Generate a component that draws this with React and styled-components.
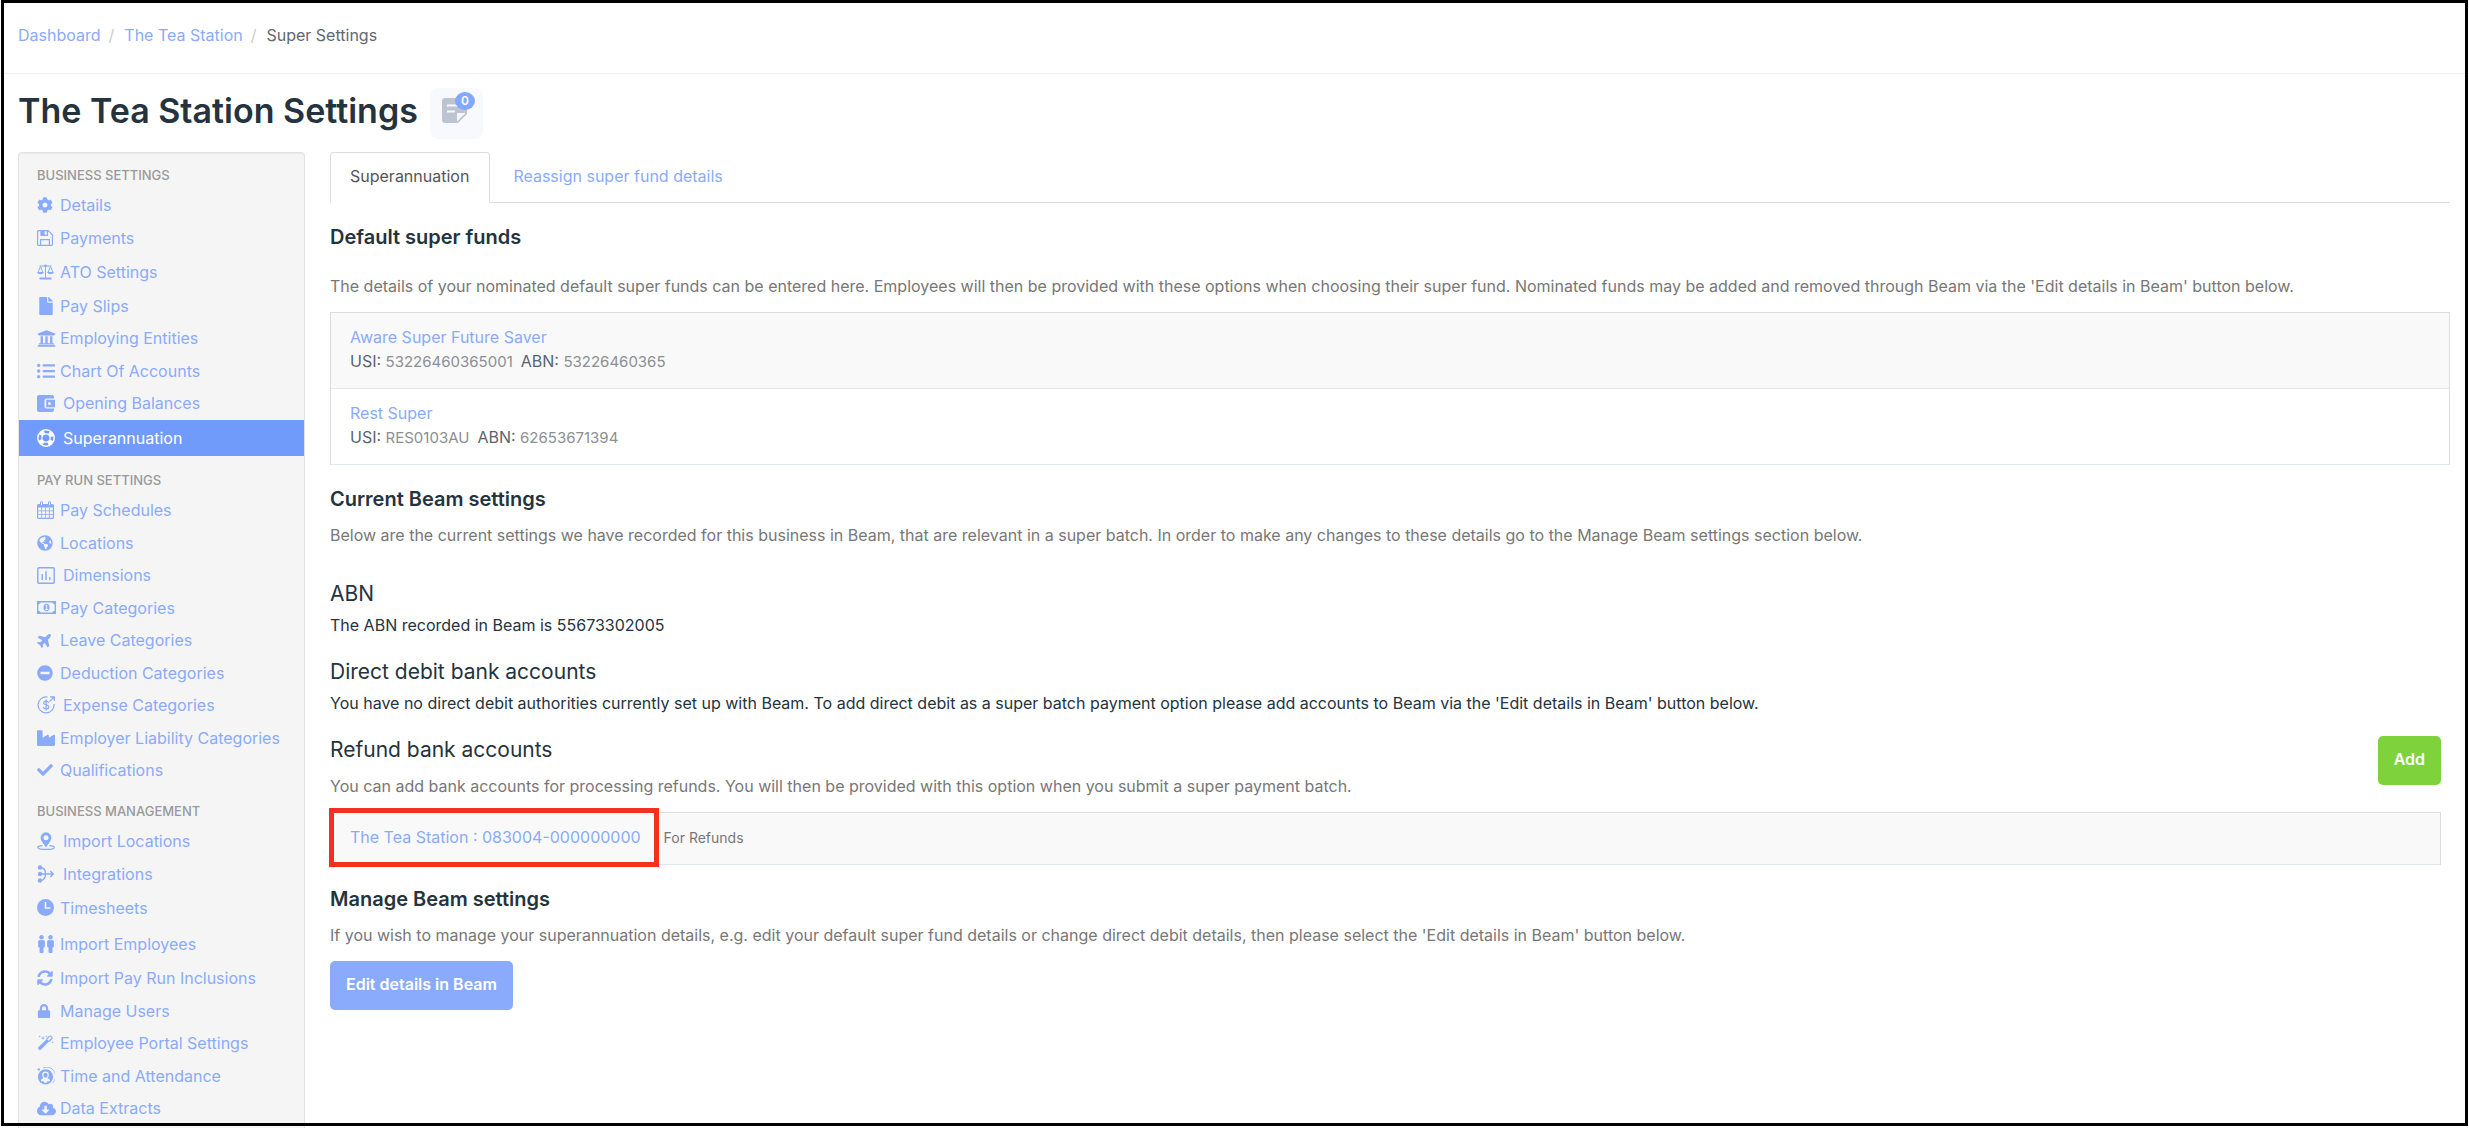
import React from 'react'
import styled, { createGlobalStyle, css } from 'styled-components';
import {
    FaCog, FaFile, FaUniversity, FaListUl, FaGlobeAmericas, FaPlane, FaMinusCircle,
    FaIndustry, FaCheck, FaMale, FaSyncAlt, FaLock, FaMagic, FaCloudDownloadAlt,
} from 'react-icons/fa';

const GlobalStyle = createGlobalStyle`
    * {
        box-sizing: border-box;
    }

    body {
        margin: 0;
        background-color: #ffffff;
        color: #24333e;
        font-family: Inter, 'Liberation Sans', sans-serif;
        font-size: 16px;
        line-height: 24px;
    }

    a {
        color: #8aabfb;
        text-decoration: none;
    }

    svg {
        display: block;
        flex: none;
    }
`;

const Page = styled.div`
    display: flex;
    flex-direction: column;
    height: 100vh;
    overflow: hidden;
`;

const Frame = styled.div`
    position: fixed;
    inset: 0 1px 2px 1px;
    border: 3px solid #000000;
    pointer-events: none;
    z-index: 10;
`;

const Breadcrumbs = styled.nav`
    display: flex;
    align-items: center;
    padding: 23px 18px 26px;
    border-bottom: 1px solid #f1f1f1;
`;

const Crumb = styled.span`
    color: #5f6770;

    &:not(:last-child)::after {
        content: '/';
        padding: 0 10px 0 8px;
        color: #cccccc;
    }
`;

const TitleBar = styled.header`
    display: flex;
    align-items: flex-start;
    gap: 12px;
    padding: 14px 18px 13px;
`;

const Title = styled.h1`
    margin: 0;
    font-size: 34px;
    font-weight: 600;
    line-height: 46px;
`;

const NotesButton = styled.button`
    position: relative;
    display: flex;
    align-items: center;
    justify-content: center;
    width: 53px;
    height: 51px;
    padding: 0 4px 6px 0;
    border: 0;
    border-radius: 8px;
    background-color: #f8f9fc;
`;

const Badge = styled.span`
    position: absolute;
    top: 4px;
    right: 8px;
    width: 20px;
    border-radius: 50%;
    background-color: #84a8fb;
    color: #ffffff;
    font-family: Inter, 'Liberation Sans', sans-serif;
    font-size: 12px;
    font-weight: 600;
    line-height: 18px;
    text-align: center;
`;

const Body = styled.div`
    display: flex;
    flex: 1;
    align-items: stretch;
    gap: 25px;
    min-height: 0;
    padding: 0 19px 0 18px;
`;

const Sidebar = styled.nav`
    flex: none;
    width: 287px;
    padding-top: 8px;
    border: 1px solid #e3e3e3;
    border-bottom: 0;
    border-radius: 4px 4px 0 0;
    background-color: #f5f5f5;
    box-shadow: inset 0 1px 1px rgba(0, 0, 0, 0.05);
    overflow: hidden;
`;

const NavHeading = styled.h2`
    margin: 0;
    padding-left: 18px;
    color: #999999;
    font-size: 13px;
    font-weight: 500;
    line-height: 28px;
`;

const NavList = styled.ul`
    margin: 0 0 10px;
    padding: 0;
    list-style: none;
`;

const NavItem = styled.li`
    height: ${({ $tall }) => ($tall ? '36px' : '33px')};

    &:nth-child(even) {
        height: ${({ $tall }) => ($tall ? '36px' : '32px')};
    }
`;

const NavLink = styled.a`
    display: flex;
    align-items: center;
    height: 100%;
    padding: 0 0 1px 18px;
    white-space: nowrap;

    ${({ $active }) => $active && css`
        background-color: #719bfb;
        color: #ffffff;
    `}
`;

const NavIcon = styled.span`
    display: flex;
    align-items: center;
    flex: none;
    width: ${({ $wide }) => ($wide ? '26px' : '23px')};
`;

const Content = styled.main`
    flex: 1;
    min-width: 0;
`;

const Tabs = styled.div`
    display: flex;
    gap: 3px;
    border-bottom: 1px solid #dddddd;
`;

const Tab = styled.a`
    margin-bottom: -1px;
    padding: 11px 20px 14px 19px;
    border: 1px solid transparent;
    border-radius: 4px 4px 0 0;

    ${({ $active }) => $active && css`
        border-color: #dddddd;
        border-bottom-color: #ffffff;
        background-color: #ffffff;
        color: #555555;
    `}
`;

const SectionTitle = styled.h3`
    margin: 18px 0 0;
    font-size: 20px;
    font-weight: 600;
    line-height: 32px;
`;

const SubTitle = styled.h4`
    margin: 0;
    font-size: 21px;
    font-weight: 400;
    line-height: 28px;
`;

const Help = styled.p`
    margin: ${({ $spaced }) => ($spaced ? '21px' : '8px')} 0 14px;
    color: #777777;
`;

const Setting = styled.section`
    margin-top: ${({ $first }) => ($first ? '33px' : '21px')};
`;

const SettingText = styled.p`
    margin: 5px 0 0;
`;

const RefundSection = styled.section`
    margin-top: 21px;
    padding-right: 9px;
`;

const RefundHeader = styled.div`
    display: flex;
    align-items: flex-start;
    justify-content: space-between;

    ${Help} {
        margin-top: 10px;
    }
`;

const Table = styled.table`
    width: 100%;
    border: 1px solid #dddddd;
    border-bottom: 0;
    border-spacing: 0;
`;

const Cell = styled.td`
    padding: 12px 19px 14px;
    border-bottom: 1px solid #e1e7f1;

    tr:nth-child(odd) > & {
        background-color: #f9f9f9;
    }
`;

const FundCodes = styled.div`
    display: flex;
    gap: 8px;
    color: #5a6470;
`;

const Code = styled.span`
    color: #8c8f93;
    font-size: 15px;
`;

const AccountLink = styled.a`
    position: relative;
    margin-right: 20px;

    &::after {
        content: '';
        position: absolute;
        inset: -19px -18px -20px -21px;
        border: 5px solid #f23022;
    }
`;

const Small = styled.small`
    padding-left: 3px;
    color: #777777;
    font-size: 14px;
`;

const Button = styled.button`
    height: 49px;
    padding: 0 16px 3px;
    border: 0;
    border-radius: 5px;
    background-color: ${({ $success }) => ($success ? '#7ed33c' : '#8aabfb')};
    color: #ffffff;
    font-family: inherit;
    font-size: 16px;
    font-weight: 600;
`;

const NoteIcon = () => (
    <svg width="25" height="25" viewBox="0 0 25 25">
        <path fill="#bcc4d2" d="M3 0h19a3 3 0 0 1 3 3v13l-9 9H3a3 3 0 0 1-3-3V3a3 3 0 0 1 3-3z" />
        <path fill="#f8f9fc" d="M5 6.500h14v2H5zM5 12.500h8v2H5zM15 15h8.500L15 23.500z" />
    </svg>
);

const FloppyIcon = () => (
    <svg width="16" height="16" viewBox="0 0 16 16" fill="none" stroke="currentColor" strokeWidth="1.200">
        <path d="M.6 1.600a1 1 0 0 1 1-1h9.600l4.200 4.200v9.600a1 1 0 0 1-1 1H1.600a1 1 0 0 1-1-1z" />
        <path d="M3.600 15.400V9.600h8.800v5.800M4 .6v4.800h6.400V.6" />
        <path fill="currentColor" stroke="none" d="M4 1h3.600v4.400H4z" />
    </svg>
);

const ScaleIcon = () => (
    <svg width="17" height="16" viewBox="0 0 17 16" fill="none" stroke="currentColor" strokeWidth="1">
        <path d="M2.500 2h12M8.500 1v13M3.500 2.500L1 8.500M3.500 2.500L6 8.500M13.500 2.500L11 8.500M13.500 2.500L16 8.500" />
        <circle cx="8.500" cy="1.800" r="1.300" fill="currentColor" stroke="none" />
        <path fill="currentColor" stroke="none" d="M.3 8h6.400c0 3-6.400 3-6.400 0zM10.300 8h6.400c0 3-6.400 3-6.400 0zM2.500 13.500h12v2h-12z" />
    </svg>
);

const WalletIcon = () => (
    <svg width="18" height="17" viewBox="0 0 18 17" fill="currentColor">
        <path d="M2 0h13a2 2 0 0 1 2 2v1.400H9.500a2 2 0 0 0-2 2v6.200a2 2 0 0 0 2 2H17V15a2 2 0 0 1-2 2H2a2 2 0 0 1-2-2V2a2 2 0 0 1 2-2z" />
        <path fillRule="evenodd" d="M9.200 4.800H18v7.400H9.200zM12.400 7a1.500 1.500 0 1 0 0 3 1.500 1.500 0 0 0 0-3z" />
    </svg>
);

const LifeRingIcon = () => (
    <svg width="18" height="18" viewBox="0 0 18 18" fill="none" stroke="currentColor">
        <circle cx="9" cy="9" r="8.200" strokeWidth="1.400" />
        <circle cx="9" cy="9" r="4.200" strokeWidth="1.200" />
        <circle cx="9" cy="9" r="6.200" strokeWidth="4" strokeDasharray="4.800 4.939" strokeDashoffset="-2.470" />
    </svg>
);

const CalendarIcon = () => (
    <svg width="17" height="18" viewBox="0 0 17 18" fill="none" stroke="currentColor">
        <path strokeWidth="1.200" d="M1.600 3.600h13.800a1 1 0 0 1 1 1v11.800a1 1 0 0 1-1 1H1.600a1 1 0 0 1-1-1V4.600a1 1 0 0 1 1-1z" />
        <path strokeWidth=".8" d="M1 9.800h15M1 13.500h15M4.600 6.600v10.800M8.500 6.600v10.800M12.400 6.600v10.800" />
        <path fill="currentColor" stroke="none" d="M1 3.500h15v3H1z" />
        <path stroke="currentColor" strokeWidth="3" strokeLinecap="round" d="M4.500 1.800v2M12.500 1.800v2" />
        <path stroke="#f5f5f5" strokeWidth="1" strokeLinecap="round" d="M4.500 1.600v2.200M12.500 1.600v2.200" />
    </svg>
);

const ChartIcon = () => (
    <svg width="18" height="17" viewBox="0 0 18 17" fill="none" stroke="currentColor" strokeWidth="1.500">
        <rect x=".8" y=".8" width="16.400" height="15.400" rx="1.200" />
        <path d="M5.200 7v6M9 4.200V13M12.800 10v3" />
    </svg>
);

const MoneyIcon = () => (
    <svg width="19" height="13" viewBox="0 0 19 13" fill="none" stroke="currentColor">
        <path strokeWidth="1.400" d="M.7.7h17.600v11.600H.7z" />
        <path fill="currentColor" stroke="none" d="M0 0h4c0 2-1.500 3.500-4 3.500zM19 0h-4c0 2 1.500 3.500 4 3.500zM0 13h4c0-2-1.500-3.500-4-3.500zM19 13h-4c0-2 1.500-3.500 4-3.500z" />
        <ellipse cx="9.500" cy="6.500" rx="3" ry="3.800" fill="currentColor" stroke="none" />
        <path stroke="#f5f5f5" d="M8.300 5l1.400-.8V8.500M8 8.600h3.200" />
    </svg>
);

const ExpenseIcon = () => (
    <svg width="18" height="18" viewBox="0 0 18 18" fill="none" stroke="currentColor" strokeWidth="1.200">
        <path d="M10.500 1.100A8 8 0 1 0 17 8" />
        <path d="M12.500 5.500L16.800 1.200M13 .8h4.300v4.300" />
        <path d="M11.600 6.800c-.3-1.100-1.200-1.600-2.500-1.600-1.500 0-2.500.7-2.500 1.800 0 2.700 5.200 1.200 5.200 4 0 1.200-1.100 1.900-2.700 1.900-1.500 0-2.500-.7-2.800-1.900M9.100 3.600v11" />
    </svg>
);

const PinIcon = () => (
    <svg width="18" height="18" viewBox="0 0 18 18" fill="currentColor">
        <path fillRule="evenodd" d="M9 .3a5.400 5.400 0 0 1 5.400 5.400C14.400 8.700 11 12 9 15.400 7 12 3.600 8.700 3.600 5.700A5.400 5.400 0 0 1 9 .3zm0 2.900a2.500 2.500 0 1 0 0 5 2.500 2.500 0 0 0 0-5z" />
        <path fill="none" stroke="currentColor" strokeWidth="1.300" d="M5.600 13.700c-3 .3-4.900.9-4.900 1.700 0 1.100 3.400 1.900 8.300 1.900s8.300-.8 8.300-1.900c0-.8-1.900-1.400-4.900-1.700" />
    </svg>
);

const MergeIcon = () => (
    <svg width="17" height="18" viewBox="0 0 17 18" fill="none" stroke="currentColor" strokeWidth="1.400">
        <circle cx="3" cy="2.500" r="2.200" fill="currentColor" stroke="none" />
        <circle cx="3" cy="9" r="2.200" fill="currentColor" stroke="none" />
        <circle cx="3" cy="15.500" r="2.200" fill="currentColor" stroke="none" />
        <path d="M3 9h13M13.200 6l3 3-3 3M3 2.500c4 0 5.500 3 5.500 6.500s-1.500 6.500-5.500 6.500" />
    </svg>
);

const ClockIcon = () => (
    <svg width="17" height="17" viewBox="0 0 17 17">
        <circle cx="8.500" cy="8.500" r="8.500" fill="currentColor" />
        <path fill="none" stroke="#f5f5f5" strokeWidth="1.500" d="M8.500 3v6h5" />
    </svg>
);

const WandIcon = () => (
    <svg width="17" height="16" viewBox="0 0 17 16" fill="none" stroke="currentColor">
        <path strokeWidth="3.400" d="M1.800 14.300L11 5.100" />
        <path strokeWidth="1.100" d="M9.600 4.200l3-3a.8.8 0 0 1 1.200 0l1.100 1.100a.8.8 0 0 1 0 1.200l-3 3" />
        <path fill="currentColor" stroke="none" d="M6 .8l.5 1.700 1.700.5-1.700.5L6 5.200l-.5-1.700L3.800 3l1.700-.5zM2.600.2l.3.900.9.3-.9.3-.3.900-.3-.9-.9-.3.9-.3zM9.500.2l.3.900.9.3-.9.3-.3.900-.3-.9-.9-.3.9-.3zM15.600 6.200l.3.900.9.3-.9.3-.3.900-.3-.9-.9-.3.9-.3z" />
    </svg>
);

const AttendanceIcon = () => (
    <svg width="18" height="18" viewBox="0 0 18 18" fill="none" stroke="currentColor">
        <circle cx="8.500" cy="9.800" r="7.600" fill="currentColor" stroke="none" />
        <path fill="#f5f5f5" stroke="none" d="M8.500 4.600a3.300 3.300 0 0 1 3.300 3.400c0 1.400-.6 2.400-1.400 3 1.700.5 2.500 1.500 2.700 3.300h-2.600l-.8 1.400H7.300l-.8-1.400H3.900c.2-1.800 1-2.800 2.700-3.300-.8-.6-1.400-1.600-1.400-3a3.300 3.300 0 0 1 3.300-3.400z" />
        <path fill="currentColor" stroke="none" d="M8.500 5.800c1.300 0 2.100 1 2.100 2.300s-.8 2.700-2.100 2.700-2.100-1.400-2.100-2.700.8-2.300 2.100-2.300z" />
        <path strokeWidth=".8" d="M6 .9a9 9 0 0 1 9.600 15" />
        <circle cx="1.800" cy="2.400" r="1.200" fill="currentColor" stroke="none" />
    </svg>
);

const PeopleIcon = styled.span`
    display: flex;

    svg {
        width: 9px;
        height: 18px;
    }
`;

const PlaneIcon = styled(FaPlane)`
    transform: rotate(-45deg);
`;

const navSections = [
    {
        title: 'BUSINESS SETTINGS',
        items: [
            { label: 'Details', icon: <FaCog size={16} /> },
            { label: 'Payments', icon: <FloppyIcon /> },
            { label: 'ATO Settings', icon: <ScaleIcon />, tall: true },
            { label: 'Pay Slips', icon: <FaFile size={18} /> },
            { label: 'Employing Entities', icon: <FaUniversity size={19} /> },
            { label: 'Chart Of Accounts', icon: <FaListUl size={18} /> },
            { label: 'Opening Balances', icon: <WalletIcon />, wide: true },
            { label: 'Superannuation', icon: <LifeRingIcon />, wide: true, tall: true, active: true },
        ],
    },
    {
        title: 'PAY RUN SETTINGS',
        items: [
            { label: 'Pay Schedules', icon: <CalendarIcon /> },
            { label: 'Locations', icon: <FaGlobeAmericas size={16} /> },
            { label: 'Dimensions', icon: <ChartIcon />, wide: true },
            { label: 'Pay Categories', icon: <MoneyIcon /> },
            { label: 'Leave Categories', icon: <PlaneIcon size={16} /> },
            { label: 'Deduction Categories', icon: <FaMinusCircle size={16} /> },
            { label: 'Expense Categories', icon: <ExpenseIcon />, wide: true },
            { label: 'Employer Liability Categories', icon: <FaIndustry size={18} /> },
            { label: 'Qualifications', icon: <FaCheck size={16} /> },
        ],
    },
    {
        title: 'BUSINESS MANAGEMENT',
        items: [
            { label: 'Import Locations', icon: <PinIcon />, wide: true },
            { label: 'Integrations', icon: <MergeIcon />, wide: true },
            { label: 'Timesheets', icon: <ClockIcon />, tall: true },
            { label: 'Import Employees', icon: <PeopleIcon><FaMale /><FaMale /></PeopleIcon>, tall: true },
            { label: 'Import Pay Run Inclusions', icon: <FaSyncAlt size={16} /> },
            { label: 'Manage Users', icon: <FaLock size={14} /> },
            { label: 'Employee Portal Settings', icon: <WandIcon /> },
            { label: 'Time and Attendance', icon: <AttendanceIcon /> },
            { label: 'Data Extracts', icon: <FaCloudDownloadAlt size={19} /> },
        ],
    },
];

const funds = [
    { name: 'Aware Super Future Saver', usi: '53226460365001', abn: '53226460365' },
    { name: 'Rest Super', usi: 'RES0103AU', abn: '62653671394' },
];

const App = () => {
    return (
        <Page>
            <GlobalStyle />
            <Breadcrumbs>
                <Crumb><a href="#dashboard">Dashboard</a></Crumb>
                <Crumb><a href="#business">The Tea Station</a></Crumb>
                <Crumb>Super Settings</Crumb>
            </Breadcrumbs>
            <TitleBar>
                <Title>The Tea Station Settings</Title>
                <NotesButton type="button" aria-label="Notes">
                    <NoteIcon />
                    <Badge>0</Badge>
                </NotesButton>
            </TitleBar>
            <Body>
                <Sidebar>
                    {navSections.map((section) => (
                        <React.Fragment key={section.title}>
                            <NavHeading>{section.title}</NavHeading>
                            <NavList>
                                {section.items.map((item) => (
                                    <NavItem key={item.label} $tall={item.tall}>
                                        <NavLink href="#settings" $active={item.active}>
                                            <NavIcon $wide={item.wide}>{item.icon}</NavIcon>
                                            {item.label}
                                        </NavLink>
                                    </NavItem>
                                ))}
                            </NavList>
                        </React.Fragment>
                    ))}
                </Sidebar>
                <Content>
                    <Tabs>
                        <Tab href="#super" $active>Superannuation</Tab>
                        <Tab href="#reassign">Reassign super fund details</Tab>
                    </Tabs>

                    <SectionTitle>Default super funds</SectionTitle>
                    <Help $spaced>
                        The details of your nominated default super funds can be entered here. Employees will then be provided with these options when choosing their super fund. Nominated funds may be added and removed through Beam via the 'Edit details in Beam' button below.
                    </Help>
                    <Table>
                        <tbody>
                            {funds.map((fund) => (
                                <tr key={fund.name}>
                                    <Cell>
                                        <a href="#fund">{fund.name}</a>
                                        <FundCodes>
                                            <span>USI: <Code>{fund.usi}</Code></span>
                                            <span>ABN: <Code>{fund.abn}</Code></span>
                                        </FundCodes>
                                    </Cell>
                                </tr>
                            ))}
                        </tbody>
                    </Table>

                    <SectionTitle>Current Beam settings</SectionTitle>
                    <Help>
                        Below are the current settings we have recorded for this business in Beam, that are relevant in a super batch. In order to make any changes to these details go to the Manage Beam settings section below.
                    </Help>
                    <Setting $first>
                        <SubTitle>ABN</SubTitle>
                        <SettingText>The ABN recorded in Beam is 55673302005</SettingText>
                    </Setting>
                    <Setting>
                        <SubTitle>Direct debit bank accounts</SubTitle>
                        <SettingText>
                            You have no direct debit authorities currently set up with Beam. To add direct debit as a super batch payment option please add accounts to Beam via the 'Edit details in Beam' button below.
                        </SettingText>
                    </Setting>
                    <RefundSection>
                        <RefundHeader>
                            <div>
                                <SubTitle>Refund bank accounts</SubTitle>
                                <Help>
                                    You can add bank accounts for processing refunds. You will then be provided with this option when you submit a super payment batch.
                                </Help>
                            </div>
                            <Button type="button" $success>Add</Button>
                        </RefundHeader>
                        <Table>
                            <tbody>
                                <tr>
                                    <Cell>
                                        <AccountLink href="#account">The Tea Station : 083004-000000000</AccountLink>
                                        <Small>For Refunds</Small>
                                    </Cell>
                                </tr>
                            </tbody>
                        </Table>
                    </RefundSection>

                    <SectionTitle>Manage Beam settings</SectionTitle>
                    <Help>
                        If you wish to manage your superannuation details, e.g. edit your default super fund details or change direct debit details, then please select the 'Edit details in Beam' button below.
                    </Help>
                    <Button type="button">Edit details in Beam</Button>
                </Content>
            </Body>
            <Frame />
        </Page>
    )
}

export default App
